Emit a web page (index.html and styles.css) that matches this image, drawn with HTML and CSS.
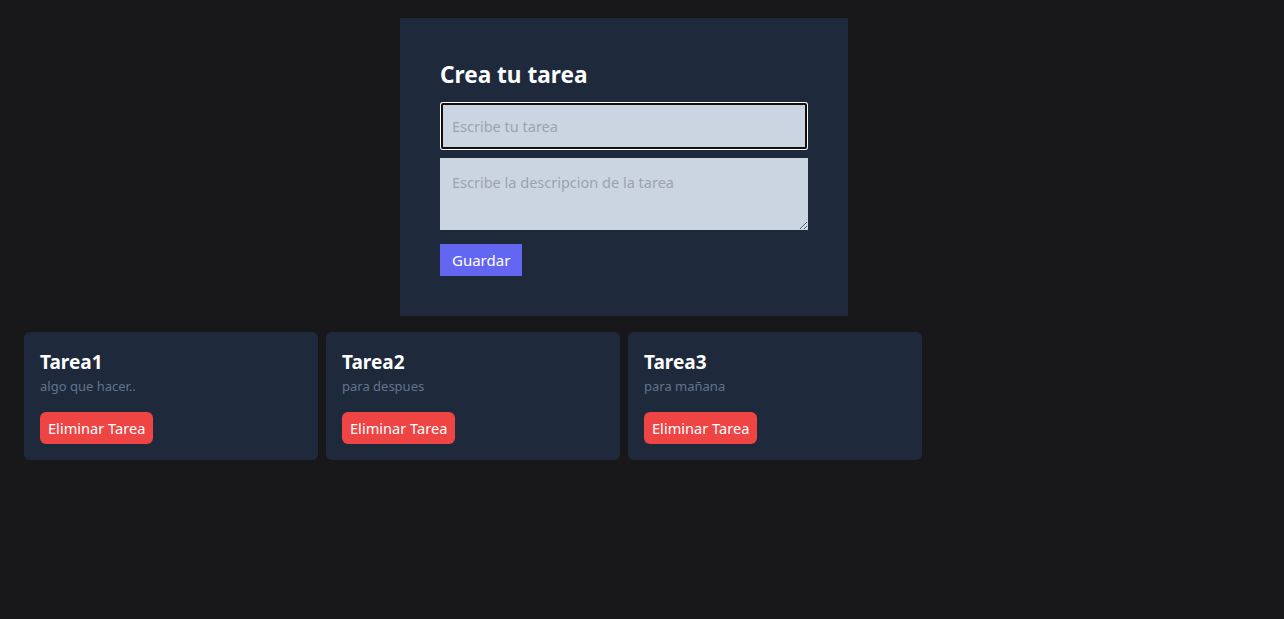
FILE: index.html
```html
<!DOCTYPE html>
<html lang="es">
<head>
<meta charset="utf-8">
<title>Tareas</title>
<link rel="stylesheet" href="styles.css">
</head>
<body>
<main class="page">
  <div class="form-wrap">
    <form class="form-card">
      <h1 class="form-title">Crea tu tarea</h1>
      <input class="field field-focus" type="text" placeholder="Escribe tu tarea" autofocus>
      <textarea class="field field-area" rows="2" placeholder="Escribe la descripcion de la tarea"></textarea>
      <button class="btn-save" type="button">Guardar</button>
    </form>
  </div>
  <section class="task-grid">
    <article class="task-card">
      <h2 class="task-title">Tarea1</h2>
      <p class="task-desc">algo que hacer..</p>
      <button class="btn-delete" type="button">Eliminar Tarea</button>
    </article>
    <article class="task-card">
      <h2 class="task-title">Tarea2</h2>
      <p class="task-desc">para despues</p>
      <button class="btn-delete" type="button">Eliminar Tarea</button>
    </article>
    <article class="task-card">
      <h2 class="task-title">Tarea3</h2>
      <p class="task-desc">para mañana</p>
      <button class="btn-delete" type="button">Eliminar Tarea</button>
    </article>
  </section>
</main>
</body>
</html>
```

FILE: styles.css
```css
* { box-sizing: border-box; }
html, body {
  margin: 0;
  height: 100%;
  background: #18181b;
  font-family: "Noto Sans", "Open Sans", sans-serif;
  color: #fff;
}
.page {
  width: 1248px;
  padding: 18px 24px;
}
.form-wrap {
  display: flex;
  justify-content: center;
}
.form-card {
  width: 448px;
  background: #1e293b;
  padding: 40px;
  display: flex;
  flex-direction: column;
  align-items: flex-start;
}
.form-title {
  margin: 0 0 12px;
  padding-top: 2px;
  font-size: 22.6px;
  line-height: 30px;
  font-weight: 700;
}
.field {
  width: 100%;
  background: #cbd5e1;
  border: 0;
  padding: 12px;
  font-family: inherit;
  font-size: 14.5px;
  line-height: 24px;
  color: #111;
  margin: 0 0 8px;
  display: block;
}
.field::placeholder { color: #9aa3af; }
.field-focus {
  height: 48px;
  border-radius: 3px;
  outline: none;
  box-shadow: inset 0 0 0 1px #fff, inset 0 0 0 3px #101010;
}
.field-area {
  height: 72px;
  margin-bottom: 14px;
  resize: vertical;
}
.btn-save {
  background: #6366f1;
  color: #fff;
  border: 0;
  font-family: inherit;
  font-size: 15px;
  line-height: 24px;
  padding: 4px 12px;
  cursor: pointer;
}
.task-grid {
  display: grid;
  grid-template-columns: repeat(4, 294px);
  gap: 8px;
  margin-top: 16px;
}
.task-card {
  background: #1e293b;
  border-radius: 6px;
  padding: 16px;
}
.task-title {
  margin: 0;
  font-size: 19px;
  line-height: 28px;
  font-weight: 700;
}
.task-desc {
  margin: 0 0 16px;
  font-size: 13px;
  line-height: 20px;
  color: #64748b;
}
.btn-delete {
  background: #ef4444;
  color: #fff;
  border: 0;
  border-radius: 6px;
  font-family: inherit;
  font-size: 14.6px;
  line-height: 24px;
  padding: 4px 8px;
  cursor: pointer;
}
```
